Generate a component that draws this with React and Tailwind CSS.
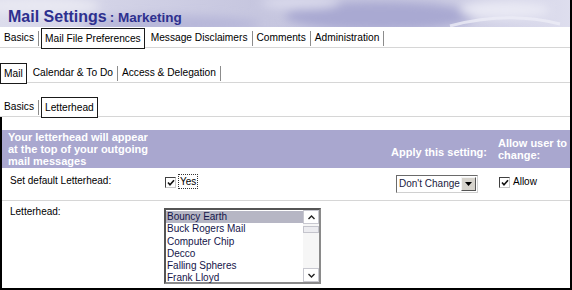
import React from "react";

const listItems = [
  "Bouncy Earth",
  "Buck Rogers Mail",
  "Computer Chip",
  "Decco",
  "Falling Spheres",
  "Frank Lloyd",
];

function TabRow({ tabs, active, className = "" }) {
  return (
    <div className={`flex h-[20px] items-start border-b border-[#d6d6d6] text-[10.2px] text-black ${className}`}>
      {tabs.map((t, i) =>
        i === active ? (
          <span
            key={t}
            className="mx-[2px] flex h-[21px] items-center border border-[#1a1a1a] bg-white px-[3px] first:ml-0"
          >
            {t}
          </span>
        ) : (
          <span key={t} className="flex h-[20px] items-center">
            <span className="px-[4px]">{t}</span>
            <span className="h-[15px] w-px bg-[#8c8c8c]" />
          </span>
        )
      )}
    </div>
  );
}

function CheckBox() {
  return (
    <span className="flex h-[11px] w-[11px] items-center justify-center border border-t-[#404040] border-l-[#404040] border-r-[#c8c8c8] border-b-[#c8c8c8] bg-white">
      <svg width="8" height="8" viewBox="0 0 8 8">
        <path d="M1 3.5 L3 5.8 L7 1.2" fill="none" stroke="#111" strokeWidth="1.6" />
      </svg>
    </span>
  );
}

function Header() {
  return (
    <div className="relative h-[27px] overflow-hidden">
      <svg className="absolute inset-0" width="572" height="27" viewBox="0 0 572 27">
        <defs>
          <filter id="blur" x="-20%" y="-50%" width="140%" height="200%">
            <feGaussianBlur stdDeviation="5" />
          </filter>
          <linearGradient id="hg" x1="0" x2="1" y1="0" y2="0">
            <stop offset="0" stopColor="#dcdcec" />
            <stop offset="0.45" stopColor="#c6c6df" />
            <stop offset="0.75" stopColor="#c9c9e1" />
            <stop offset="1" stopColor="#dedeee" />
          </linearGradient>
        </defs>
        <rect width="572" height="27" fill="url(#hg)" />
        <g filter="url(#blur)">
          <ellipse cx="380" cy="16" rx="95" ry="14" fill="#a9a9d2" />
          <ellipse cx="170" cy="24" rx="90" ry="9" fill="#b7b7d9" />
          <ellipse cx="40" cy="6" rx="60" ry="9" fill="#e8e8f2" />
          <ellipse cx="505" cy="10" rx="45" ry="9" fill="#e9e9f4" />
          <ellipse cx="300" cy="3" rx="40" ry="6" fill="#dadaec" />
        </g>
        <path d="M450 26 C480 18 520 14 560 24" stroke="#ececf6" strokeWidth="3" fill="none" opacity="0.8" />
      </svg>
      <div className="relative flex items-baseline pl-[8px] pt-[8px] font-bold text-[#2e308f]">
        <span className="text-[16px] leading-[18px]">Mail Settings</span>
        <span className="ml-[3px] text-[13.5px] leading-[18px]">: Marketing</span>
      </div>
    </div>
  );
}

export default function App() {
  return (
    <div className="flex h-[290px] w-[572px] flex-col overflow-hidden border-r-2 border-b-2 border-black bg-white font-['Liberation_Sans',Arial,sans-serif]">
      <Header />
      <TabRow
        className="mt-px"
        tabs={["Basics", "Mail File Preferences", "Message Disclaimers", "Comments", "Administration"]}
        active={1}
      />
      <TabRow className="mt-[15px]" tabs={["Mail", "Calendar & To Do", "Access & Delegation"]} active={0} />
      <TabRow className="mt-[14px]" tabs={["Basics", "Letterhead"]} active={1} />

      <div className="flex flex-1 flex-col border-l-2 border-black pt-[13px]">
        <div className="flex h-[38px] bg-[#a9a7cf] text-[11px] font-bold leading-[12px] text-white">
          <div className="flex-1 pl-[6px] pt-[1px]">
            Your letterhead will appear
            <br />
            at the top of your outgoing
            <br />
            mail messages
          </div>
          <div className="self-end pb-[10px] pr-[11px]">Apply this setting:</div>
          <div className="w-[72px] self-end pb-[7px]">
            Allow user to
            <br />
            change:
          </div>
        </div>

        <div className="flex h-[33px] border-b border-[#d6d6d6] text-[10px] leading-[12px] text-black">
          <div className="w-[163px] pl-[8px] pt-[7px]">Set default Letterhead:</div>
          <div className="flex w-[231px] items-start">
            <span className="mt-[9px]">
              <CheckBox />
            </span>
            <span className="ml-[2px] mt-[6px] flex h-[15px] items-center border border-dotted border-[#333] px-[1px]">
              Yes
            </span>
          </div>
          <div className="w-[103px] pt-[7px]">
            <div className="flex h-[18px] w-[82px] items-center border border-t-[#6a6a6a] border-l-[#6a6a6a] border-r-[#d0d0d0] border-b-[#d0d0d0] bg-white pl-[2px] text-[#1a1a40]">
              <span className="flex-1">Don't Change</span>
              <span className="mr-px flex h-[14px] w-[15px] items-center justify-center border border-t-[#f4f4f4] border-l-[#f4f4f4] border-r-[#555] border-b-[#555] bg-[#d6d3cc]">
                <svg width="7" height="4" viewBox="0 0 7 4">
                  <path d="M0 0 H7 L3.5 4 Z" fill="#000" />
                </svg>
              </span>
            </div>
          </div>
          <div className="flex flex-1 items-start">
            <span className="mt-[9px]">
              <CheckBox />
            </span>
            <span className="ml-[3px] mt-[8px]">Allow</span>
          </div>
        </div>

        <div className="flex flex-1 text-[10px] text-black">
          <div className="w-[162px] pl-[8px] pt-[5px] leading-[12px]">Letterhead:</div>
          <div className="mt-[7px] flex h-[76px] w-[157px] border-2 border-t-[#555] border-l-[#555] border-r-[#8a8a8a] border-b-[#8a8a8a] bg-white">
            <div className="flex-1 pt-px">
              {listItems.map((item, i) => (
                <div
                  key={item}
                  className={`h-[12.3px] pl-[1px] leading-[12.3px] text-[#15154a] ${i === 0 ? "bg-[#b6b6c4]" : ""}`}
                >
                  {item}
                </div>
              ))}
            </div>
            <div className="flex w-[16px] flex-col bg-[#f6f6f6]">
              <span className="flex h-[14px] items-center justify-center border border-[#c8c8d0] bg-white">
                <svg width="7" height="5" viewBox="0 0 7 5">
                  <path d="M0.5 4 L3.5 1 L6.5 4" fill="none" stroke="#222" strokeWidth="1.4" />
                </svg>
              </span>
              <span className="mt-[2px] h-[7px] border border-[#c4c4cc] bg-[#ececf0]" />
              <span className="flex-1" />
              <span className="flex h-[14px] items-center justify-center border border-[#c8c8d0] bg-white">
                <svg width="7" height="5" viewBox="0 0 7 5">
                  <path d="M0.5 1 L3.5 4 L6.5 1" fill="none" stroke="#222" strokeWidth="1.4" />
                </svg>
              </span>
            </div>
          </div>
        </div>
      </div>
    </div>
  );
}
